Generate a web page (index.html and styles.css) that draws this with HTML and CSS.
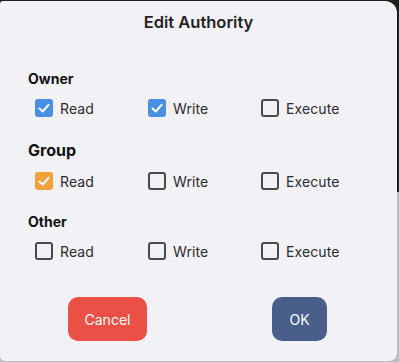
FILE: index.html
```html
<!DOCTYPE html>
<html lang="en">
<head>
    <meta charset="UTF-8">
    <title>Edit Authority</title>
    <link rel="stylesheet" href="styles.css">
</head>
<body>
    <div class="dialog">
        <h1 class="dialog-title">Edit Authority</h1>

        <div class="perm-group">
            <h2 class="perm-title">Owner</h2>
            <div class="perm-row">
                <label class="perm"><span class="box box-blue"><svg viewBox="0 0 18 18"><polyline points="4.5,9.5 7.8,12.5 13.5,5.8"/></svg></span>Read</label>
                <label class="perm"><span class="box box-blue"><svg viewBox="0 0 18 18"><polyline points="4.5,9.5 7.8,12.5 13.5,5.8"/></svg></span>Write</label>
                <label class="perm"><span class="box"></span>Execute</label>
            </div>
        </div>

        <div class="perm-group">
            <h2 class="perm-title perm-title-big">Group</h2>
            <div class="perm-row">
                <label class="perm"><span class="box box-orange"><svg viewBox="0 0 18 18"><polyline points="4.5,9.5 7.8,12.5 13.5,5.8"/></svg></span>Read</label>
                <label class="perm"><span class="box"></span>Write</label>
                <label class="perm"><span class="box"></span>Execute</label>
            </div>
        </div>

        <div class="perm-group">
            <h2 class="perm-title">Other</h2>
            <div class="perm-row">
                <label class="perm"><span class="box"></span>Read</label>
                <label class="perm"><span class="box"></span>Write</label>
                <label class="perm"><span class="box"></span>Execute</label>
            </div>
        </div>

        <div class="actions">
            <button class="btn btn-cancel">Cancel</button>
            <button class="btn btn-ok">OK</button>
        </div>
    </div>
</body>
</html>
```

FILE: styles.css
```css
html, body {
    margin: 0;
    height: 100%;
}
body {
    font-family: Inter, "Noto Sans", sans-serif;
    background: linear-gradient(to bottom, #1e1e1e 0, #1e1e1e 192px, #bdbdbd 192px);
    color: #222;
    padding-top: 1px;
    box-sizing: border-box;
}
.dialog {
    width: 397px;
    height: 360px;
    background-color: #f2f1f6;
    border-radius: 3px 12px 8px 5px;
    box-sizing: border-box;
    padding-top: 11px;
}
.dialog-title {
    margin: 0;
    font-size: 16.5px;
    font-weight: 600;
    line-height: 20px;
    text-align: center;
    color: #242424;
}
.perm-group {
    padding-left: 28px;
    margin-top: 22px;
}
.perm-group:first-of-type {
    margin-top: 37px;
}
.perm-title {
    margin: 0 0 10px;
    font-size: 14px;
    font-weight: 700;
    line-height: 20px;
    color: #111;
}
.perm-title-big {
    font-size: 16px;
    line-height: 23px;
    margin-bottom: 10px;
}
.perm-row {
    display: flex;
    padding-left: 7px;
}
.perm {
    display: flex;
    align-items: center;
    width: 113px;
    height: 18px;
    font-size: 14px;
    letter-spacing: 0.1px;
    color: #2b2b2b;
}
.box {
    width: 18px;
    height: 18px;
    box-sizing: border-box;
    border: 2px solid #4a4a4e;
    border-radius: 3px;
    margin-right: 7px;
    flex-shrink: 0;
}
.box svg {
    display: block;
    width: 18px;
    height: 18px;
    margin: -2px;
}
.box polyline {
    fill: none;
    stroke: #fff;
    stroke-width: 2;
    stroke-linecap: round;
    stroke-linejoin: round;
}
.box-blue {
    background-color: #4a90e2;
    border-color: #4a90e2;
}
.box-orange {
    background-color: #f3a03d;
    border-color: #f3a03d;
}
.actions {
    display: flex;
    justify-content: space-between;
    padding: 0 70px 0 68px;
    margin-top: 37px;
}
.btn {
    height: 44px;
    padding: 0;
    border: none;
    border-radius: 10px;
    font-family: Inter, "Noto Sans", sans-serif;
    font-size: 14px;
    color: #fff;
    cursor: pointer;
}
.btn-cancel {
    background-color: #ea5045;
    width: 79px;
}
.btn-ok {
    background-color: #4a5e8c;
    width: 55px;
}
```
